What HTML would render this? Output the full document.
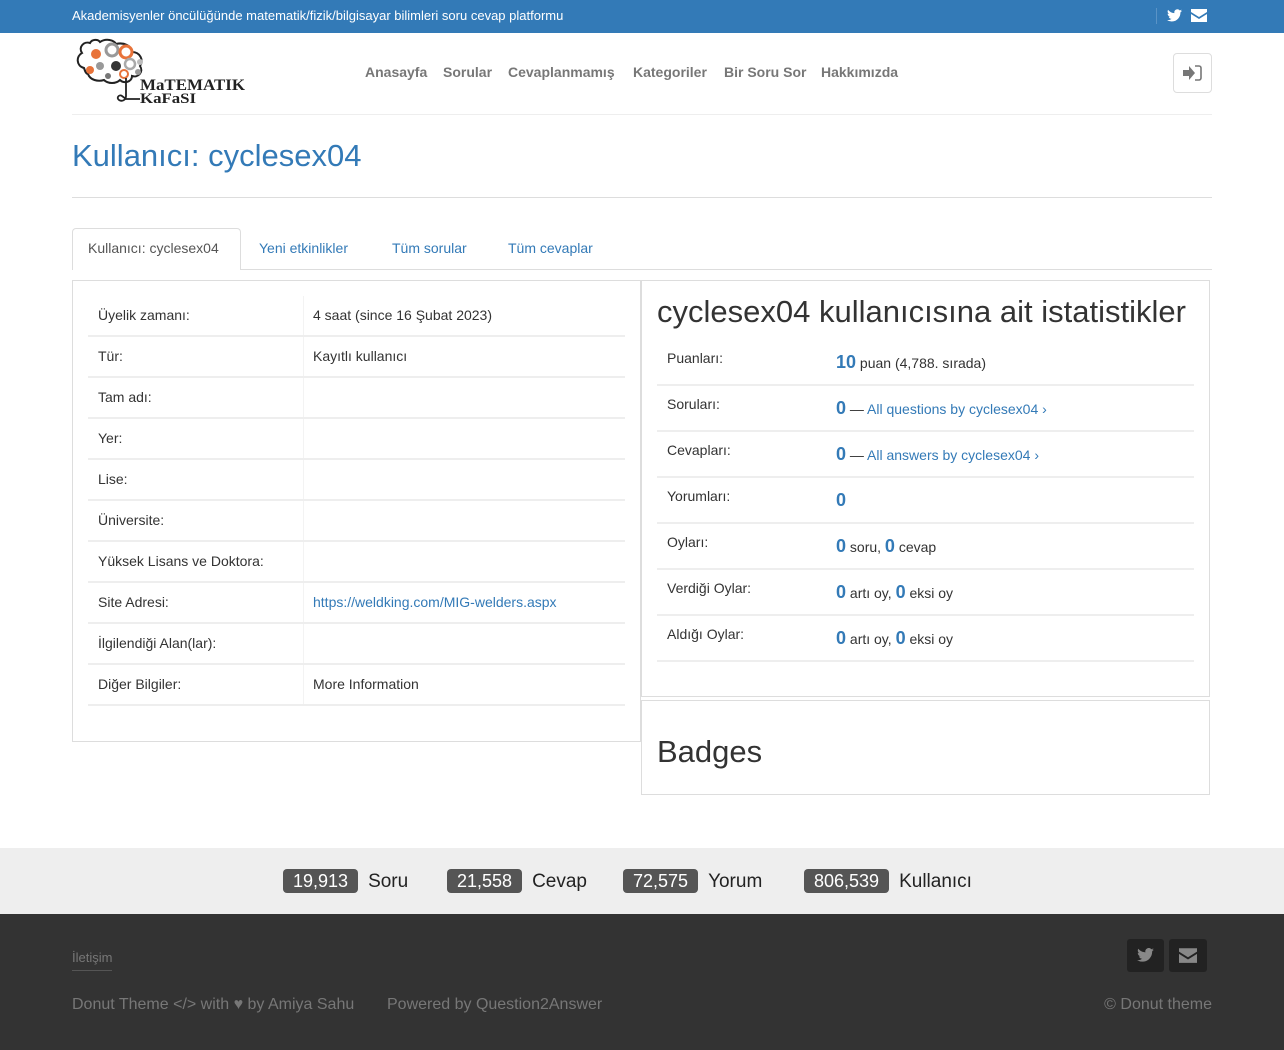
<!DOCTYPE html>
<html><head><meta charset="utf-8"><style>
*{box-sizing:border-box;margin:0;padding:0}
body{width:1284px;height:1050px;position:relative;font-family:"Liberation Sans",sans-serif;color:#333;background:#fff;overflow:hidden}
.a{position:absolute;white-space:nowrap}
a{color:#337ab7;text-decoration:none}
.top{left:0;top:0;width:1284px;height:33px;background:#337ab7}
.nav{top:64px;font-size:14px;font-weight:bold;color:#777}
.row{position:absolute;left:88px;width:537px;height:41px;border-bottom:2px solid #eee;font-size:14px}
.row span{position:absolute;top:11px}
.row .k{left:10px}.row .v{left:225px}
.row:before{content:"";position:absolute;left:215px;top:0;bottom:0;border-left:1px solid #f3f3f3}
.sr{position:absolute;left:657px;width:537px;height:46px;border-bottom:2px solid #eee;font-size:14px}
.sr .k{position:absolute;left:10px;top:10px}
.sr .v{position:absolute;left:179px;top:12px}
.n{color:#337ab7;font-weight:bold;font-size:18px}
.badge{display:inline-block;background:#555;color:#fff;border-radius:4px;padding:0 10px;height:24px;line-height:24px;font-size:18px;margin-right:10px}
.st{top:869px;font-size:19px;color:#222}
.ft{color:#777;font-size:16px}
</style></head><body>
<div class="a top"></div>
<div class="a" style="left:72px;top:8px;font-size:13px;color:#fff">Akademisyenler öncülüğünde matematik/fizik/bilgisayar bilimleri soru cevap platformu</div>
<div class="a" style="left:1156px;top:8px;height:16px;border-left:1px solid #5a93c6"></div>
<svg class="a" style="left:1167px;top:9px" width="15" height="13" viewBox="0 0 24 20"><path fill="#fff" d="M24 2.4c-.9.4-1.8.6-2.8.8 1-.6 1.8-1.6 2.2-2.7-1 .6-2 1-3.1 1.2A4.9 4.9 0 0 0 11.9 6.2 14 14 0 0 1 1.7 1 4.9 4.9 0 0 0 3.2 7.6c-.8 0-1.6-.3-2.2-.6 0 2.4 1.7 4.4 3.9 4.8-.7.2-1.5.2-2.2.1.6 2 2.4 3.4 4.6 3.4A9.9 9.9 0 0 1 0 17.3 14 14 0 0 0 7.5 19.5c9.1 0 14-7.5 14-14v-.6c1-.7 1.8-1.6 2.5-2.5z"/></svg>
<svg class="a" style="left:1191px;top:9px" width="16" height="13" viewBox="0 0 16 13"><path fill="#fff" d="M0 0h16v3L8 8 0 3z M0 5l8 5 8-5v8H0z"/></svg>
<!-- logo (page coords) -->
<svg class="a" style="left:0;top:0" width="260" height="110" viewBox="0 0 260 110">
<path d="M84 68c-8-2-8-12-2-15-4-6 2-12 8-10 2-4 8-4 10-1 6-4 14-2 16 2 8-2 16 2 16 8 8 0 12 8 8 14 4 6-2 12-8 10 0 6-8 8-12 4-4 4-12 4-16 0-6 2-14 0-16-6-2 0-3-3-4-6z" fill="none" stroke="#222" stroke-width="2"/>
<circle cx="96" cy="54" r="5" fill="#e8733a"/><circle cx="112" cy="50" r="6" fill="none" stroke="#999" stroke-width="3"/><circle cx="126" cy="52" r="6" fill="none" stroke="#e8733a" stroke-width="3"/>
<circle cx="100" cy="66" r="4" fill="#999"/><circle cx="116" cy="66" r="5" fill="#333"/><circle cx="130" cy="64" r="5" fill="none" stroke="#aaa" stroke-width="2.5"/><circle cx="140" cy="62" r="3" fill="#bbb"/><circle cx="90" cy="70" r="4" fill="#e8733a"/><circle cx="124" cy="74" r="4" fill="none" stroke="#e8733a" stroke-width="2"/><circle cx="108" cy="76" r="3" fill="#777"/><circle cx="138" cy="72" r="3" fill="#999"/>
<path d="M126 78v18c0 4-4 6-7 4s0-6 3-4l4 3h14" fill="none" stroke="#222" stroke-width="1.8"/>
<text x="140" y="90" font-family="Liberation Serif,serif" font-size="16" font-weight="bold" fill="#222" textLength="105" lengthAdjust="spacingAndGlyphs">MaTEMATIK</text>
<text x="140" y="103" font-family="Liberation Serif,serif" font-size="15" font-weight="bold" fill="#222" textLength="56" lengthAdjust="spacingAndGlyphs">KaFaSI</text>
</svg>
<div class="a nav" style="left:365px">Anasayfa</div>
<div class="a nav" style="left:443px">Sorular</div>
<div class="a nav" style="left:508px">Cevaplanmamış</div>
<div class="a nav" style="left:633px">Kategoriler</div>
<div class="a nav" style="left:724px">Bir Soru Sor</div>
<div class="a nav" style="left:821px">Hakkımızda</div>
<div class="a" style="left:1173px;top:53px;width:39px;height:40px;border:1px solid #ddd;border-radius:4px"></div>
<svg class="a" style="left:1183px;top:65px" width="19" height="16" viewBox="0 0 19 16"><path fill="#777" d="M0 5h6V1l6 7-6 7v-4H0z"/><path d="M12 1h4a2 2 0 0 1 2 2v10a2 2 0 0 1-2 2h-4" fill="none" stroke="#777" stroke-width="1.6"/></svg>
<div class="a" style="left:72px;top:114px;width:1140px;border-top:1px solid #eee"></div>
<div class="a" style="left:72px;top:138px;font-size:31px;color:#337ab7">Kullanıcı: cyclesex04</div>
<div class="a" style="left:72px;top:197px;width:1140px;border-top:1px solid #ddd"></div>
<!-- tabs -->
<div class="a" style="left:72px;top:269px;width:1140px;border-top:1px solid #ddd"></div>
<div class="a" style="left:72px;top:228px;width:169px;height:42px;border:1px solid #ddd;border-bottom:none;background:#fff;border-radius:4px 4px 0 0"></div>
<div class="a" style="left:88px;top:240px;font-size:14px;color:#555">Kullanıcı: cyclesex04</div>
<div class="a" style="left:259px;top:240px;font-size:14px"><a>Yeni etkinlikler</a></div>
<div class="a" style="left:392px;top:240px;font-size:14px"><a>Tüm sorular</a></div>
<div class="a" style="left:508px;top:240px;font-size:14px"><a>Tüm cevaplar</a></div>
<!-- left panel -->
<div class="a" style="left:72px;top:280px;width:569px;height:462px;border:1px solid #ddd"></div>
<div class="row" style="top:296px"><span class="k">Üyelik zamanı:</span><span class="v">4 saat (since 16 Şubat 2023)</span></div>
<div class="row" style="top:337px"><span class="k">Tür:</span><span class="v">Kayıtlı kullanıcı</span></div>
<div class="row" style="top:378px"><span class="k">Tam adı:</span></div>
<div class="row" style="top:419px"><span class="k">Yer:</span></div>
<div class="row" style="top:460px"><span class="k">Lise:</span></div>
<div class="row" style="top:501px"><span class="k">Üniversite:</span></div>
<div class="row" style="top:542px"><span class="k">Yüksek Lisans ve Doktora:</span></div>
<div class="row" style="top:583px"><span class="k">Site Adresi:</span><span class="v"><a>https://weldking.com/MIG-welders.aspx</a></span></div>
<div class="row" style="top:624px"><span class="k">İlgilendiği Alan(lar):</span></div>
<div class="row" style="top:665px"><span class="k">Diğer Bilgiler:</span><span class="v">More Information</span></div>
<!-- right panel -->
<div class="a" style="left:641px;top:280px;width:569px;height:417px;border:1px solid #ddd"></div>
<div class="a" style="left:657px;top:294px;font-size:31px;color:#333">cyclesex04 kullanıcısına ait istatistikler</div>
<div class="sr" style="top:340px"><span class="k">Puanları:</span><span class="v"><b class="n">10</b> puan (4,788. sırada)</span></div>
<div class="sr" style="top:386px"><span class="k">Soruları:</span><span class="v"><b class="n">0</b> — <a>All questions by cyclesex04 ›</a></span></div>
<div class="sr" style="top:432px"><span class="k">Cevapları:</span><span class="v"><b class="n">0</b> — <a>All answers by cyclesex04 ›</a></span></div>
<div class="sr" style="top:478px"><span class="k">Yorumları:</span><span class="v"><b class="n">0</b></span></div>
<div class="sr" style="top:524px"><span class="k">Oyları:</span><span class="v"><b class="n">0</b> soru, <b class="n">0</b> cevap</span></div>
<div class="sr" style="top:570px"><span class="k">Verdiği Oylar:</span><span class="v"><b class="n">0</b> artı oy, <b class="n">0</b> eksi oy</span></div>
<div class="sr" style="top:616px"><span class="k">Aldığı Oylar:</span><span class="v"><b class="n">0</b> artı oy, <b class="n">0</b> eksi oy</span></div>
<div class="a" style="left:641px;top:700px;width:569px;height:95px;border:1px solid #ddd"></div>
<div class="a" style="left:657px;top:734px;font-size:31px;color:#333">Badges</div>
<!-- stats -->
<div class="a" style="left:0;top:848px;width:1284px;height:66px;background:#eee"></div>
<div class="a st" style="left:283px"><span class="badge">19,913</span>Soru</div>
<div class="a st" style="left:447px"><span class="badge">21,558</span>Cevap</div>
<div class="a st" style="left:623px"><span class="badge">72,575</span>Yorum</div>
<div class="a st" style="left:804px"><span class="badge">806,539</span>Kullanıcı</div>
<!-- footer -->
<div class="a" style="left:0;top:914px;width:1284px;height:136px;background:#333"></div>
<div class="a" style="left:72px;top:950px;font-size:13px;color:#777;padding-bottom:5px;border-bottom:1px solid #555">İletişim</div>
<div class="a ft" style="left:72px;top:996px">Donut Theme &lt;/&gt; with ♥ by Amiya Sahu</div>
<div class="a ft" style="left:387px;top:996px">Powered by Question2Answer</div>
<div class="a ft" style="right:72px;top:996px">© Donut theme</div>
<div class="a" style="left:1127px;top:939px;width:37px;height:33px;background:#222;border-radius:3px"></div>
<div class="a" style="left:1169px;top:939px;width:38px;height:33px;background:#222;border-radius:3px"></div>
<svg class="a" style="left:1137px;top:948px" width="17" height="14" viewBox="0 0 24 20"><path fill="#888" d="M24 2.4c-.9.4-1.8.6-2.8.8 1-.6 1.8-1.6 2.2-2.7-1 .6-2 1-3.1 1.2A4.9 4.9 0 0 0 11.9 6.2 14 14 0 0 1 1.7 1 4.9 4.9 0 0 0 3.2 7.6c-.8 0-1.6-.3-2.2-.6 0 2.4 1.7 4.4 3.9 4.8-.7.2-1.5.2-2.2.1.6 2 2.4 3.4 4.6 3.4A9.9 9.9 0 0 1 0 17.3 14 14 0 0 0 7.5 19.5c9.1 0 14-7.5 14-14v-.6c1-.7 1.8-1.6 2.5-2.5z"/></svg>
<svg class="a" style="left:1179px;top:948px" width="18" height="15" viewBox="0 0 16 13"><path fill="#888" d="M0 0h16v3L8 8 0 3z M0 5l8 5 8-5v8H0z"/></svg>
</body></html>
